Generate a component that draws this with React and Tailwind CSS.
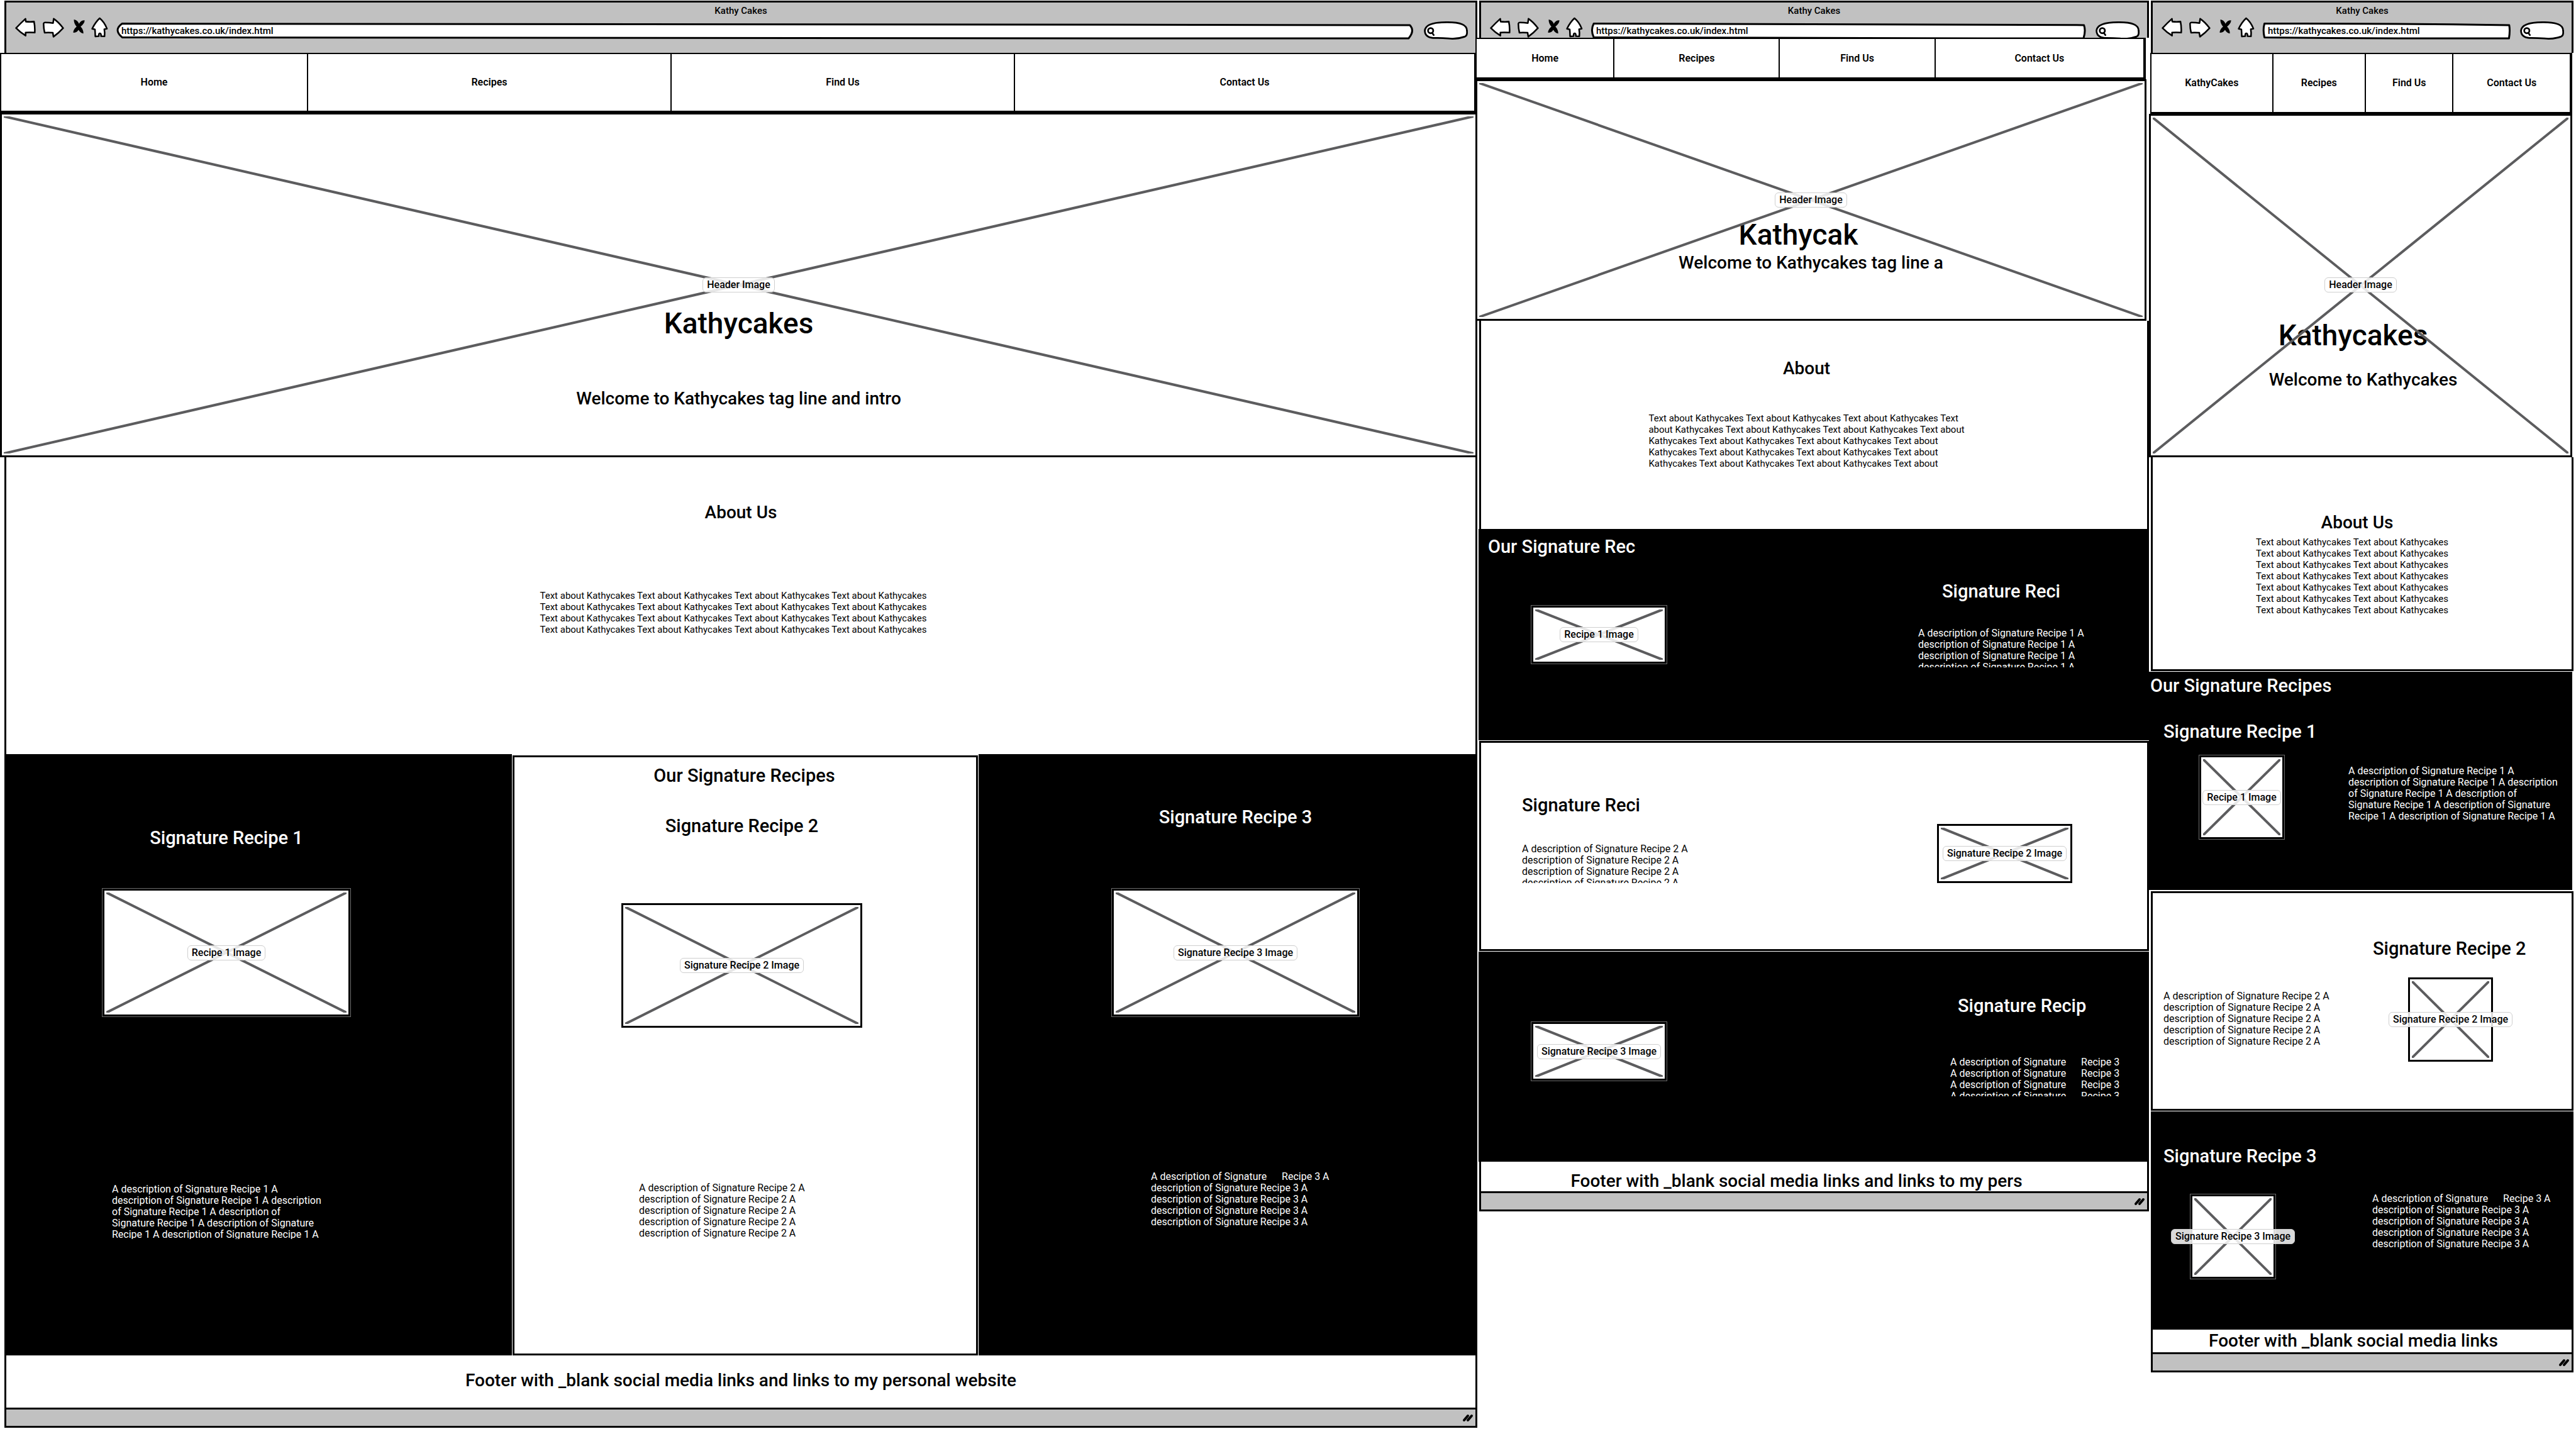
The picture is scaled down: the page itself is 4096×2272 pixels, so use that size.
const WINDOW_TITLE = "Kathy Cakes";
const ADDRESS = "https://kathycakes.co.uk/index.html";

const repeat = (text, times) => Array.from({ length: times }, () => text);

const RECIPE_1_LONG = [
  "A description of Signature Recipe 1 A",
  "description of Signature Recipe 1 A description",
  "of Signature Recipe 1 A description of",
  "Signature Recipe 1 A description of Signature",
  "Recipe 1 A description of Signature Recipe 1 A",
];
const RECIPE_2 = [
  "A description of Signature Recipe 2 A",
  ...repeat("description of Signature Recipe 2 A", 4),
];
const RECIPE_3 = [
  "A description of Signature      Recipe 3 A",
  ...repeat("description of Signature Recipe 3 A", 4),
];

function ToolButton({ label, viewBox, className, children }) {
  return (
    <button type="button" aria-label={label} className={`block h-[33px] ${className}`}>
      <svg
        viewBox={viewBox}
        className="block h-full w-full"
        fill="white"
        stroke="black"
        strokeWidth="13"
        strokeLinejoin="round"
      >
        {children}
      </svg>
    </button>
  );
}

function BrowserBar({ id, className }) {
  return (
    <header
      className={`overflow-hidden border-x-3 border-t-3 border-black bg-[#c1c1c1] ${className}`}
    >
      <p className="pt-1 text-center text-[15px] leading-[18px]">{WINDOW_TITLE}</p>
      <div className="flex items-end pt-px pr-3 pl-[14px]">
        <div className="flex pb-[3px]">
          <ToolButton label="Back" viewBox="122 136 170 168" className="w-[33px]">
            <path d="M130 226 Q165 188 207 150 L210 173 Q245 177 277 173 Q286 215 283 263 Q245 259 208 262 L208 288 Q165 262 130 226Z" />
          </ToolButton>
          <ToolButton label="Forward" viewBox="346 136 174 168" className="ml-[11px] w-[34px]">
            <path d="M353 188 Q355 180 364 180 Q400 180 430 185 L435 150 Q470 172 512 226 Q480 262 433 296 L428 264 Q395 260 361 263 Q352 225 353 188Z" />
          </ToolButton>
          <ToolButton label="Stop" viewBox="592 136 98 168" className="ml-[14px] w-[19px]">
            <path
              stroke="none"
              fill="black"
              d="M600 155 Q628 158 642 190 Q658 161 688 162 Q688 188 655 214 Q679 240 678 270 Q653 266 638 240 Q622 264 595 264 Q593 240 622 214 Q598 185 600 155Z"
            />
          </ToolButton>
          <ToolButton label="Home" viewBox="740 136 140 168" className="ml-[10px] w-[27px]">
            <path d="M810 145 Q848 175 870 231 L848 236 Q853 260 850 294 L821 293 Q824 270 811 269 Q800 269 803 292 L774 295 Q773 260 771 237 L748 232 Q775 176 810 145Z" />
          </ToolButton>
        </div>
        <div className="relative mb-px ml-[14px] h-[26px] min-w-0 flex-1">
          <svg
            className="absolute inset-0 h-full w-full overflow-visible"
            viewBox="0 0 100 100"
            preserveAspectRatio="none"
            fill="white"
            stroke="black"
            strokeWidth="3"
            strokeLinejoin="round"
          >
            <path
              vectorEffect="non-scaling-stroke"
              d="M0.4 6 Q50 4 99.7 15 Q100.1 50 99.6 96 Q50 98 0.4 90 Q-0.3 45 0.4 6Z"
            />
          </svg>
          <label htmlFor={`${id}-address`} className="sr-only">
            Address
          </label>
          <input
            id={`${id}-address`}
            type="text"
            defaultValue={ADDRESS}
            className="relative block h-full w-full bg-transparent px-[7px] text-[15px] leading-[18px] outline-none"
          />
        </div>
        <div className="relative ml-4 h-[29px] w-[70px]">
          <svg
            viewBox="172 172 355 148"
            className="absolute inset-0 h-full w-full"
            fill="white"
            stroke="black"
            strokeWidth="14"
            strokeLinecap="round"
          >
            <path d="M246 307 Q178 300 179 246 Q186 178 360 179 Q520 178 520 245 Q526 285 505 295 Q440 318 370 311 Q300 306 246 307Z" />
            <circle cx="226" cy="247" r="21" />
            <path d="M238 265 L251 283" />
          </svg>
          <label htmlFor={`${id}-search`} className="sr-only">
            Search
          </label>
          <input
            id={`${id}-search`}
            type="search"
            className="relative block h-full w-full bg-transparent pr-3 pl-5 text-[15px] outline-none"
          />
        </div>
      </div>
    </header>
  );
}

function Nav({ items, className }) {
  return (
    <nav
      className={`grid border-t-2 border-r-4 border-b-3 border-l-2 border-black bg-white ${className}`}
    >
      {items.map((item, i) => (
        <a
          key={item}
          href={`#${item}`}
          className={`flex items-center justify-center text-[16px] leading-[18px] font-semibold ${
            i < items.length - 1 ? "border-r-2 border-black" : ""
          }`}
        >
          {item}
        </a>
      ))}
    </nav>
  );
}

function Cross() {
  return (
    <svg
      className="absolute inset-[3px] h-[calc(100%-6px)] w-[calc(100%-6px)]"
      stroke="#5c5c5e"
      strokeWidth="4"
      aria-hidden="true"
    >
      <line x1="0" y1="0" x2="100%" y2="100%" />
      <line x1="100%" y1="0" x2="0" y2="100%" />
    </svg>
  );
}

function Caption({ children }) {
  return (
    <figcaption className="relative z-10 h-6 rounded-md border border-[#cfcfcf] bg-white/85 px-[6px] text-[16px] leading-[22px] whitespace-nowrap text-black">
      {children}
    </figcaption>
  );
}

function Picture({ label, className }) {
  return (
    <figure
      className={`relative flex shrink-0 items-center justify-center border-3 border-black bg-white ${className}`}
    >
      <Cross />
      <Caption>{label}</Caption>
    </figure>
  );
}

function Hero({ className, children }) {
  return (
    <figure
      className={`relative flex flex-col items-center border-3 border-black bg-white ${className}`}
    >
      <Caption>Header Image</Caption>
      {children}
      <Cross />
    </figure>
  );
}

function Brand({ className, children }) {
  return <h1 className={`text-[46px] leading-[54px] whitespace-nowrap ${className}`}>{children}</h1>;
}

function Heading({ className, children }) {
  return <h2 className={`text-[28px] leading-8 whitespace-nowrap ${className}`}>{children}</h2>;
}

function RecipeHeading({ className, children }) {
  return <h3 className={`text-[29px] leading-8 whitespace-nowrap ${className}`}>{children}</h3>;
}

function Lines({ lines, className }) {
  return (
    <p className={`overflow-hidden leading-[18px] font-normal whitespace-pre ${className}`}>
      {lines.map((line, i) => (
        <span key={i} className="block">
          {line}
        </span>
      ))}
    </p>
  );
}

function StatusBar({ className }) {
  return (
    <div
      className={`flex h-8 items-center justify-end border-3 border-black bg-[#c1c1c1] pr-[3px] ${className}`}
    >
      <svg width="18" height="14" viewBox="0 0 18 14" stroke="black" strokeWidth="4" strokeLinecap="round">
        <path d="M3 11 L9 4 M9 11 L15 4" />
      </svg>
    </div>
  );
}

const ON_BLACK = "outline outline-1 outline-[#6b6b6b]";

function DesktopWindow() {
  return (
    <article className="pt-px">
      <BrowserBar id="desktop" className="ml-[7px] h-[83px]" />
      <Nav
        items={["Home", "Recipes", "Find Us", "Contact Us"]}
        className="mr-px h-[95px] grid-cols-[488fr_578fr_546fr_730fr]"
      />
      <Hero className="h-[548px] pt-[259px]">
        <Brand className="mt-[22px]">Kathycakes</Brand>
        <Heading className="mt-[77px]">Welcome to Kathycakes tag line and intro</Heading>
      </Hero>
      <section className="ml-[7px] flex h-[472px] flex-col items-center border-x-3 border-black pt-[72px]">
        <Heading>About Us</Heading>
        <div className="mt-[107px] pr-6">
          <Lines
            className="text-[15px]"
            lines={repeat(
              "Text about Kathycakes Text about Kathycakes Text about Kathycakes Text about Kathycakes",
              4
            )}
          />
        </div>
      </section>
      <section className="ml-[7px] grid h-[956px] grid-cols-[807fr_741fr_794fr]">
        <div className="bg-black pt-[117px] pr-[257px] pl-[156px] text-white">
          <RecipeHeading className="text-center">Signature Recipe 1</RecipeHeading>
          <Picture label="Recipe 1 Image" className={`mt-[65px] h-[203px] ${ON_BLACK}`} />
          <Lines lines={RECIPE_1_LONG} className="mt-[266px] ml-[15px] h-[88px] text-[16px]" />
        </div>
        <div className="border-t-2 border-l border-white bg-white">
          <div className="h-full border-3 border-black pt-[13px] pr-[181px] pl-[170px]">
            <RecipeHeading className="pl-2 text-center">Our Signature Recipes</RecipeHeading>
            <RecipeHeading className="mt-[48px] text-center">Signature Recipe 2</RecipeHeading>
            <Picture label="Signature Recipe 2 Image" className="mt-[107px] h-[198px]" />
            <Lines lines={RECIPE_2} className="mt-[246px] ml-[28px] text-[16px]" />
          </div>
        </div>
        <div className="border-l border-white bg-black pt-[84px] pr-[188px] pl-[212px] text-white">
          <RecipeHeading className="text-center">Signature Recipe 3</RecipeHeading>
          <Picture label="Signature Recipe 3 Image" className={`mt-[98px] h-[203px] ${ON_BLACK}`} />
          <Lines lines={RECIPE_3} className="mt-[246px] ml-[62px] text-[16px]" />
        </div>
      </section>
      <footer className="ml-[7px] flex h-[83px] items-center justify-center border-x-3 border-black pb-1">
        <Heading>Footer with _blank social media links and links to my personal website</Heading>
      </footer>
      <StatusBar className="ml-[7px]" />
    </article>
  );
}

function TabletWindow() {
  return (
    <article className="relative pt-px">
      <BrowserBar id="tablet" className="ml-[3px] h-[59px]" />
      <Nav
        items={["Home", "Recipes", "Find Us", "Contact Us"]}
        className="mr-[5px] -ml-[3px] h-[66px] grid-cols-[219fr_263fr_247fr_330fr]"
      />
      <Hero className="mr-1 -ml-[3px] h-[384px] pt-[177px]">
        <Brand className="mt-4 pr-10">Kathycak</Brand>
        <Heading className="mt-[2px]">Welcome to Kathycakes tag line a</Heading>
      </Hero>
      <section className="ml-[3px] flex h-[331px] flex-col items-center border-x-3 border-black pt-[60px] pr-6">
        <Heading>About</Heading>
        <Lines
          className="mt-[54px] h-[88px] text-[15px]"
          lines={[
            "Text about Kathycakes Text about Kathycakes Text about Kathycakes Text",
            "about Kathycakes Text about Kathycakes Text about Kathycakes Text about",
            ...repeat("Kathycakes Text about Kathycakes Text about Kathycakes Text about", 3),
          ]}
        />
      </section>
      <section className="ml-[2px] h-[336px] bg-black pt-3 text-white">
        <RecipeHeading className="pl-[15px]">Our Signature Rec</RecipeHeading>
        <div className="flex items-start justify-between pl-[84px]">
          <Picture label="Recipe 1 Image" className={`mt-[78px] h-[92px] w-[215px] ${ON_BLACK}`} />
          <div className="mt-[39px] w-[367px]">
            <RecipeHeading className="pl-[38px]">Signature Reci</RecipeHeading>
            <Lines
              className="mt-[42px] h-[63px] text-[16px]"
              lines={[
                "A description of Signature Recipe 1 A",
                ...repeat("description of Signature Recipe 1 A", 3),
              ]}
            />
          </div>
        </div>
      </section>
      <section className="mt-px ml-[3px] flex h-[334px] items-start justify-between border-3 border-black pr-[119px] pl-[65px]">
        <div className="mt-[83px]">
          <RecipeHeading>Signature Reci</RecipeHeading>
          <Lines className="mt-[45px] h-[63px] text-[16px]" lines={RECIPE_2.slice(0, 4)} />
        </div>
        <Picture label="Signature Recipe 2 Image" className="mt-[129px] h-[94px] w-[215px]" />
      </section>
      <section className="mt-px ml-[2px] flex h-[334px] items-start justify-between bg-black pl-[84px] text-white">
        <Picture
          label="Signature Recipe 3 Image"
          className={`mt-[112px] h-[93px] w-[215px] ${ON_BLACK}`}
        />
        <div className="mt-[70px] w-[316px]">
          <RecipeHeading className="pl-3">Signature Recip</RecipeHeading>
          <Lines
            className="mt-[65px] h-[63px] text-[16px]"
            lines={repeat("A description of Signature      Recipe 3", 4)}
          />
        </div>
      </section>
      <footer className="ml-[3px] flex h-[47px] items-end justify-center border-x-3 border-black pr-14">
        <Heading>Footer with _blank social media links and links to my pers</Heading>
      </footer>
      <StatusBar className="ml-[3px]" />
    </article>
  );
}

function PhoneWindow() {
  return (
    <article className="pt-px">
      <BrowserBar id="phone" className="mr-1 ml-[3px] h-[83px]" />
      <Nav
        items={["KathyCakes", "Recipes", "Find Us", "Contact Us"]}
        className="mr-[6px] ml-[2px] h-[97px] grid-cols-[193fr_147fr_139fr_184fr]"
      />
      <Hero className="mr-[6px] h-[546px] pt-[257px]">
        <Brand className="mt-[41px] pr-6">Kathycakes</Brand>
        <Heading className="mt-7 pl-2">Welcome to Kathycakes</Heading>
      </Hero>
      <section className="mr-1 ml-[3px] flex h-[340px] flex-col items-center border-x-3 border-b-3 border-black pt-[88px] pr-4">
        <Heading>About Us</Heading>
        <div className="mt-[6px] pr-4">
          <Lines
            className="text-[15px]"
            lines={repeat("Text about Kathycakes Text about Kathycakes", 7)}
          />
        </div>
      </section>
      <section className="mt-px mr-[6px] h-[347px] bg-black pt-[6px] text-white">
        <RecipeHeading className="pl-[2px]">Our Signature Recipes</RecipeHeading>
        <RecipeHeading className="mt-[41px] pl-[23px]">Signature Recipe 1</RecipeHeading>
        <div className="mt-[22px] flex items-start pl-20">
          <Picture label="Recipe 1 Image" className={`h-[133px] w-[135px] ${ON_BLACK}`} />
          <Lines lines={RECIPE_1_LONG} className="mt-4 ml-[102px] text-[16px]" />
        </div>
      </section>
      <section className="mt-[2px] mr-1 ml-[3px] flex h-[349px] items-start border-3 border-black">
        <Lines lines={RECIPE_2} className="mt-[155px] w-[350px] pl-[17px] text-[16px]" />
        <div className="mt-[72px]">
          <RecipeHeading>Signature Recipe 2</RecipeHeading>
          <Picture
            label="Signature Recipe 2 Image"
            className="mt-[30px] ml-[56px] h-[134px] w-[135px]"
          />
        </div>
      </section>
      <section className="mt-px mr-1 ml-[3px] h-[347px] bg-black pt-[55px] text-white">
        <RecipeHeading className="pl-5">Signature Recipe 3</RecipeHeading>
        <div className="flex items-start pl-[63px]">
          <Picture
            label="Signature Recipe 3 Image"
            className={`mt-[45px] h-[134px] w-[135px] ${ON_BLACK}`}
          />
          <Lines lines={RECIPE_3} className="mt-[43px] ml-[154px] text-[16px]" />
        </div>
      </section>
      <footer className="mr-1 ml-[3px] flex h-9 items-center justify-center border-x-3 border-black pr-7">
        <Heading>Footer with _blank social media links</Heading>
      </footer>
      <StatusBar className="mr-1 ml-[3px]" />
    </article>
  );
}

export default function App() {
  return (
    <main className="grid min-h-screen grid-cols-[2349fr_1068fr_679fr] items-start bg-white font-['Roboto',sans-serif] font-medium text-black">
      <DesktopWindow />
      <TabletWindow />
      <PhoneWindow />
    </main>
  );
}
